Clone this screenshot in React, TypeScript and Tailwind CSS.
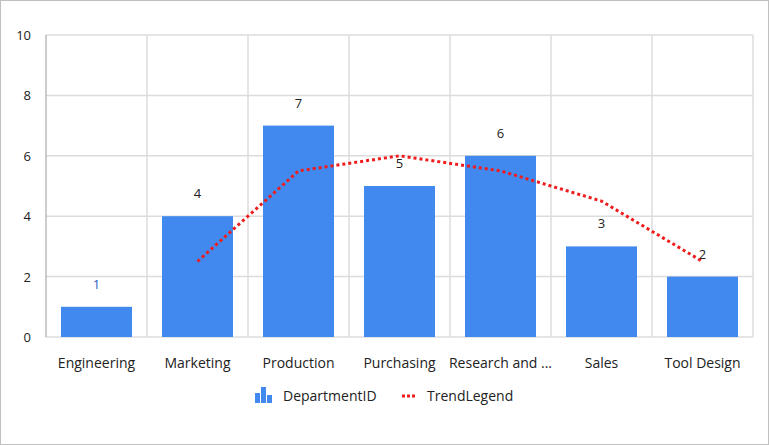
const cats = ['Engineering', 'Marketing', 'Production', 'Purchasing', 'Research and ...', 'Sales', 'Tool Design']
const vals = [1, 4, 7, 5, 6, 3, 2]
const trend = [null, 2.5, 5.5, 6, 5.5, 4.5, 2.5]

const L = 45, T = 34, B = 336, CW = 101
const y = (v: number) => B - (v / 10) * (B - T)
const cx = (i: number) => L + CW * i + CW / 2

export default function App() {
  const pts = trend
    .map((t, i) => (t === null ? null : `${cx(i)},${y(t)}`))
    .filter(Boolean)
    .join(' ')
  return (
    <div className="w-[769px] h-[445px] bg-white border border-[#c0c0c0] font-['Open_Sans','Noto_Sans',sans-serif]">
      <svg width="767" height="443" className="block" fontFamily="'Open Sans', 'Noto Sans', sans-serif">
        {/* grid */}
        {[0, 2, 4, 6, 8, 10].map(v => (
          <g key={v}>
            <line x1={L} x2={752} y1={y(v)} y2={y(v)} stroke="#dcdcdc" strokeWidth={1.5} />
            <text x={30} y={y(v) + 5} fontSize={13} textAnchor="end" fill="#222">{v}</text>
          </g>
        ))}
        {cats.map((_, i) => (
          <line key={i} x1={L + CW * (i + 1)} x2={L + CW * (i + 1)} y1={T} y2={B} stroke="#dcdcdc" strokeWidth={1.5} />
        ))}
        <line x1={L} x2={L} y1={T} y2={B} stroke="#9a9a9a" strokeWidth={1} />
        {/* bars */}
        {vals.map((v, i) => (
          <g key={i}>
            <rect x={cx(i) - 35.5} y={y(v)} width={71} height={B - y(v)} fill="#4189ee" />
            <text x={cx(i)} y={y(v) - 18} fontSize={13} textAnchor="middle" fill={i === 0 ? '#1f5fbf' : '#222'}>{v}</text>
            <text x={cx(i)} y={367} fontSize={14} textAnchor="middle" fill="#222">{cats[i]}</text>
          </g>
        ))}
        <polyline points={pts} fill="none" stroke="#ee1c1c" strokeWidth={3} strokeDasharray="3 3" />
        {/* legend */}
        <g>
          <rect x={254} y={392} width={5} height={10} fill="#4189ee" />
          <rect x={260} y={386} width={5} height={16} fill="#4189ee" />
          <rect x={266} y={394} width={5} height={8} fill="#4189ee" />
          <text x={282} y={400} fontSize={14} fill="#222">DepartmentID</text>
          <line x1={401} x2={414} y1={395} y2={395} stroke="#ee1c1c" strokeWidth={3} strokeDasharray="3 2" />
          <text x={426} y={400} fontSize={14} fill="#222">TrendLegend</text>
        </g>
      </svg>
    </div>
  )
}
